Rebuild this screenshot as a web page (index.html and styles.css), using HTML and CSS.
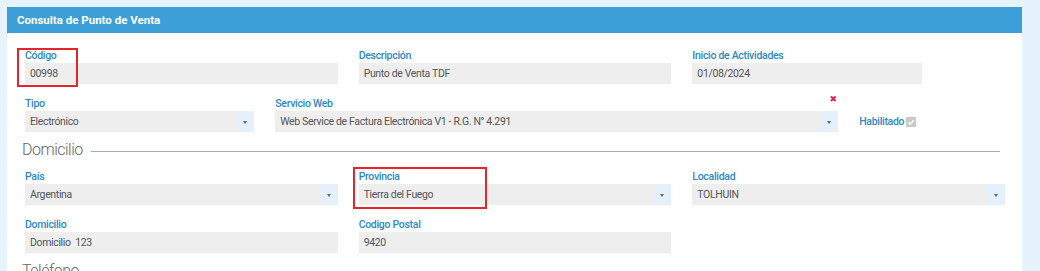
FILE: index.html
```html
<!DOCTYPE html>
<html lang="es">
<head>
  <meta charset="UTF-8">
  <title>Consulta de Punto de Venta</title>
  <link rel="stylesheet" href="styles.css">
</head>
<body>

<div class="panel">
  <div class="panel-heading">Consulta de Punto de Venta</div>
  <div class="panel-body">

    <div class="row">
      <div class="field span-4">
        <span class="mark mark-codigo"></span>
        <label>Código</label>
        <div class="input">00998</div>
      </div>
      <div class="field span-4">
        <label>Descripción</label>
        <div class="input">Punto de Venta TDF</div>
      </div>
      <div class="field span-3">
        <label>Inicio de Actividades</label>
        <div class="input">01/08/2024</div>
      </div>
    </div>

    <div class="row">
      <div class="field span-3">
        <label>Tipo</label>
        <div class="input select">Electrónico<span class="caret"></span></div>
      </div>
      <div class="field span-7">
        <label>Servicio Web <span class="clear">&#10006;</span></label>
        <div class="input select">Web Service de Factura Electrónica V1 - R.G. N° 4.291<span class="caret"></span></div>
      </div>
      <div class="check span-2">
        <span>Habilitado</span>
        <span class="box">
          <svg width="10" height="10" viewBox="0 0 10 10"><path d="M2.2 5.2 L4.2 7.1 L7.9 2.9" fill="none" stroke="#fff" stroke-width="1.5"/></svg>
        </span>
      </div>
    </div>

    <h3 class="section">Domicilio</h3>

    <div class="row">
      <div class="field span-4">
        <label>País</label>
        <div class="input select">Argentina<span class="caret"></span></div>
      </div>
      <div class="field span-4">
        <span class="mark mark-provincia"></span>
        <label>Provincia</label>
        <div class="input select">Tierra del Fuego<span class="caret"></span></div>
      </div>
      <div class="field span-4">
        <label>Localidad</label>
        <div class="input select">TOLHUIN<span class="caret"></span></div>
      </div>
    </div>

    <div class="row">
      <div class="field span-4">
        <label>Domicilio</label>
        <div class="input">Domicilio&nbsp; 123</div>
      </div>
      <div class="field span-4">
        <label>Codigo Postal</label>
        <div class="input">9420</div>
      </div>
    </div>

    <h3 class="section">Teléfono</h3>

  </div>
</div>

</body>
</html>
```

FILE: styles.css
```css
body {
  margin: 0;
  padding: 7px 0 0 7px;
  background: #e6f2fc;
  font-family: Roboto, "Liberation Sans", Arial, sans-serif;
  height: 271px;
  overflow: hidden;
  box-sizing: border-box;
}
.panel {
  width: 1015px;
  background: #fff;
  min-height: 300px;
}
.panel-heading {
  height: 26px;
  line-height: 26px;
  background: #3d9fd7;
  color: #fff;
  font-size: 11.5px;
  font-weight: bold;
  padding-left: 10px;
}
.panel-body {
  padding: 16px 17px 0 18px;
}
.row {
  display: grid;
  grid-template-columns: repeat(12, 1fr);
  column-gap: 21px;
}
.row + .row {
  margin-top: 13px;
}
.span-2 { grid-column: span 2; }
.span-3 { grid-column: span 3; }
.span-4 { grid-column: span 4; }
.span-7 { grid-column: span 7; }

.field {
  position: relative;
}
.field label {
  display: flex;
  justify-content: space-between;
  align-items: center;
  height: 13px;
  line-height: 13px;
  margin-bottom: 1px;
  font-size: 10.5px;
  font-weight: 500;
  letter-spacing: -0.3px;
  color: #2e88c3;
}
.clear {
  color: #e0245e;
  font-family: "DejaVu Sans", sans-serif;
  font-size: 9px;
  letter-spacing: 0;
  margin-right: 1px;
  margin-top: -9px;
}
.input {
  position: relative;
  height: 21px;
  line-height: 21px;
  background: #eeeeee;
  color: #555;
  font-size: 10.5px;
  letter-spacing: -0.35px;
  padding-left: 5px;
  white-space: nowrap;
  overflow: hidden;
}
.caret {
  position: absolute;
  right: 0;
  top: 0;
  width: 17px;
  height: 21px;
  background: #e4f0fb;
}
.caret::after {
  content: "";
  position: absolute;
  left: 6px;
  top: 10px;
  border-left: 2.5px solid transparent;
  border-right: 2.5px solid transparent;
  border-top: 3px solid #666;
}
.check {
  display: flex;
  align-items: center;
  align-self: end;
  height: 21px;
  font-size: 10.5px;
  font-weight: 500;
  letter-spacing: -0.3px;
  color: #2e88c3;
  gap: 2px;
}
.check .box {
  display: inline-flex;
  width: 10px;
  height: 10px;
  background: #c9c9c9;
  border-radius: 1px;
}
.section {
  display: flex;
  align-items: center;
  margin: 7px 5px 9px -3px;
  height: 22px;
  line-height: 22px;
  font-size: 16px;
  font-weight: 300;
  letter-spacing: -0.5px;
  color: #666;
  gap: 8px;
}
.section::after {
  content: "";
  flex: 1;
  height: 1px;
  margin-top: 2px;
  background: #aaa;
}
.mark {
  position: absolute;
  z-index: 1;
  border: 2px solid #e2262c;
  box-sizing: border-box;
}
.mark-codigo {
  left: -8px;
  top: -1px;
  width: 61px;
  height: 39px;
}
.mark-provincia {
  left: -6px;
  top: -3px;
  width: 134px;
  height: 42px;
}
```
